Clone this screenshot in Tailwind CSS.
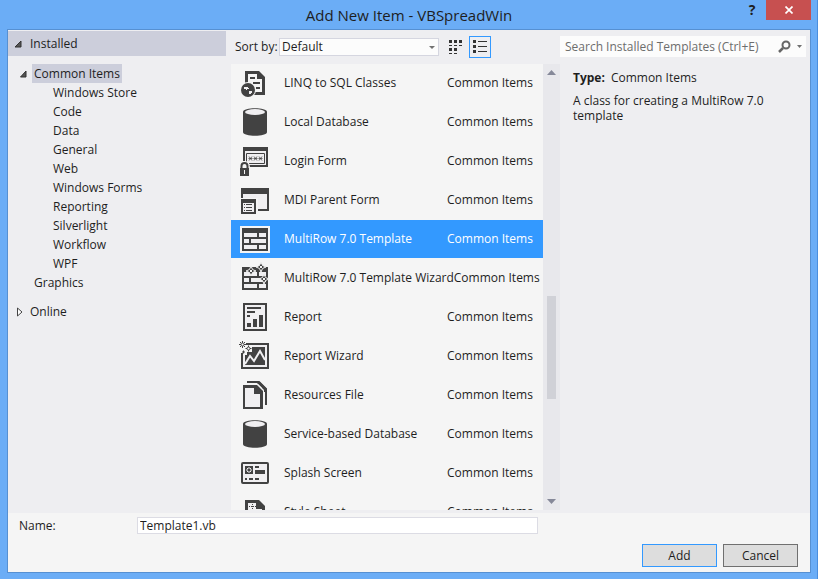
<!DOCTYPE html>
<html lang="en">
  <head>
    <meta charset="UTF-8" />
    <meta name="viewport" content="width=device-width, initial-scale=1.0" />
    <title>Add New Item - VBSpreadWin</title>
    <script src="https://cdn.jsdelivr.net/npm/@tailwindcss/browser@4"></script>
  </head>
  <body class="font-['Segoe_UI','Open_Sans',sans-serif] text-xs text-[#1e1e1e]">
    <!-- shared icons -->
    <svg class="hidden">
      <symbol id="database" viewBox="0 0 32 32">
        <path fill="#424242" d="M4 6c0-5 24-5 24 0v20c0 5-24 5-24 0z" />
        <ellipse cx="16" cy="6" rx="10" ry="3" fill="#f0eff1" />
      </symbol>
      <symbol id="bricks" viewBox="0 0 32 32">
        <path fill="#424242" d="M3 5h26v23H3z" />
        <path fill="#f0eff1" d="M5 10h13v4H5zM20 10h7v4h-7zM5 16h5v4H5zM12 16h15v4H12zM5 22h13v4H5zM20 22h7v4h-7z" />
      </symbol>
    </svg>

    <div class="flex flex-col h-screen bg-[#6badf6] border-r border-[#4a8ede] pl-[7px] pr-[6px] pb-[6px]">
      <header class="relative flex h-[29px] shrink-0 items-center justify-center">
        <h1 class="text-[15px] leading-5">Add New Item - VBSpreadWin</h1>
        <div class="absolute right-0 top-0 flex">
          <button class="w-7 h-5 text-sm leading-5 font-bold" aria-label="Help">?</button>
          <button class="flex w-[45px] h-5 items-center justify-center bg-[#c75050]" aria-label="Close">
            <svg width="8" height="8" viewBox="0 0 8 8" stroke="#fff" stroke-width="1.700"><path d="M0.500 0.500l7 7M7.500 0.500l-7 7" /></svg>
          </button>
        </div>
      </header>

      <div class="flex flex-col flex-1 min-h-0 border border-[#5690d2] bg-[#f5f5f5]">
        <main class="flex flex-1 min-h-0 bg-[#eeeef1]">
          <nav class="w-[218px] shrink-0 pt-px">
            <button class="flex w-full h-[25px] items-center gap-2 pl-1.5 bg-[#cccedb]">
              <svg width="8" height="8" viewBox="0 0 8 8"><path d="M7 1v6H1z" fill="#555" stroke="#333" /></svg>
              Installed
            </button>
            <div class="mt-2 flex h-[19px] items-center gap-1 pl-3">
              <svg width="8" height="8" viewBox="0 0 8 8"><path d="M6 1v6H0.500z" fill="#555" stroke="#333" /></svg>
              <button class="h-[19px] px-0.5 bg-[#cccedb]">Common Items</button>
            </div>
            <ul class="pl-[45px] leading-[19px]">
              <li><button>Windows Store</button></li>
              <li><button>Code</button></li>
              <li><button>Data</button></li>
              <li><button>General</button></li>
              <li><button>Web</button></li>
              <li><button>Windows Forms</button></li>
              <li><button>Reporting</button></li>
              <li><button>Silverlight</button></li>
              <li><button>Workflow</button></li>
              <li><button>WPF</button></li>
            </ul>
            <button class="block pl-[26px] leading-[19px]">Graphics</button>
            <button class="mt-[10px] flex h-[19px] items-center gap-[7px] pl-[9px]">
              <svg width="6" height="10" viewBox="0 0 6 10"><path d="M0.500 1v8L5 5z" fill="#fff" stroke="#444" /></svg>
              Online
            </button>
          </nav>

          <section class="flex flex-col flex-1 min-w-0 ml-[5px]">
            <div class="flex h-[34px] shrink-0 items-center pl-1">
              <label for="sort" class="w-11 whitespace-nowrap">Sort by:</label>
              <div class="relative flex items-center">
                <select id="sort" class="w-40 h-[18px] pl-0.5 leading-4 appearance-none bg-[#fcfcfc] border border-[#d5d6e0]">
                  <option>Default</option>
                </select>
                <svg class="absolute right-1 pointer-events-none" width="6" height="3" viewBox="0 0 6 3"><path d="M0 0h6L3 3z" fill="#717171" /></svg>
              </div>
              <button class="ml-1.5 mr-0.5 flex w-[22px] h-[22px] items-center justify-center" aria-label="Small icons">
                <svg width="14" height="14" viewBox="0 0 14 14" fill="#333">
                  <path d="M0 0h3v3H0zM5 0h3v3H5zM10 0h3v3h-3zM0 8h3v3H0zM5 8h3v3H5zM0 5h3v1H0zM5 5h3v1H5zM10 5h3v1h-3zM0 13h3v1H0zM5 13h3v1H5z" />
                </svg>
              </button>
              <button class="flex w-[22px] h-[22px] items-center justify-center border border-[#3399ff]" aria-label="List">
                <svg width="14" height="14" viewBox="0 0 14 14" fill="#333">
                  <path d="M0 0h3v3H0zM0 5h3v3H0zM0 10h3v3H0zM5 1h9v1H5zM5 6h9v1H5zM5 11h9v1H5z" />
                </svg>
              </button>
            </div>

            <div class="flex flex-1 min-h-0 mb-[3px]">
              <ul class="flex flex-col gap-px flex-1 min-w-0 overflow-hidden bg-[#f5f5f5]" role="listbox" aria-label="Templates">
                <li role="option" class="flex h-[38px] shrink-0 items-center pl-2">
                  <svg class="size-8 shrink-0 mr-[13px]" viewBox="0 0 32 32">
                    <path fill="#424242" d="M6 4h14l6 6v18H6z" />
                    <path fill="#f5f5f5" d="M9 7h9v5h5v13H9z" />
                    <path fill="#424242" d="M11 10h5v2h-5zM14 15h7v2h-7zM17 20h4v2h-4z" />
                    <circle cx="9" cy="23" r="8" fill="#f5f5f5" />
                    <circle cx="9" cy="23" r="7" fill="#424242" />
                    <path fill="#f0eff1" d="M5 20h4v1h1v3H8v-1H7v-1H5zM10 24h3v2h-1v1h-2z" />
                    <path fill="#424242" d="M8 22h2v2H8z" />
                  </svg>
                  <span class="flex-1 whitespace-nowrap">LINQ to SQL Classes</span>
                  <span class="w-24 whitespace-nowrap">Common Items</span>
                </li>
                <li role="option" class="flex h-[38px] shrink-0 items-center pl-2">
                  <svg class="size-8 shrink-0 mr-[13px]"><use href="#database" /></svg>
                  <span class="flex-1 whitespace-nowrap">Local Database</span>
                  <span class="w-24 whitespace-nowrap">Common Items</span>
                </li>
                <li role="option" class="flex h-[38px] shrink-0 items-center pl-2">
                  <svg class="size-8 shrink-0 mr-[13px]" viewBox="0 0 32 32">
                    <path fill="#424242" d="M4 2h25v20H4z" />
                    <path fill="#f0eff1" d="M6 6h21v14H6z" />
                    <path fill="none" stroke="#424242" d="M7.500 8.500h18v10h-18z" />
                    <path stroke="#424242" d="M10 11.500l3 4M13 11.500l-3 4M15 11.500l3 4M18 11.500l-3 4M20 11.500l3 4M23 11.500l-3 4M9.500 13.500h4M14.500 13.500h4M19.500 13.500h4" stroke-width=".8" />
                    <path fill="#f5f5f5" d="M0 22l1-4 3-2h3l3 2 1 4v10H0z" />
                    <path fill="none" stroke="#424242" stroke-width="2" d="M2.500 23v-2a3 3 0 0 1 6 0v2" />
                    <path fill="#424242" d="M1 23h9v8H1z" />
                    <path fill="#f5f5f5" d="M5 25h1v4H5z" />
                  </svg>
                  <span class="flex-1 whitespace-nowrap">Login Form</span>
                  <span class="w-24 whitespace-nowrap">Common Items</span>
                </li>
                <li role="option" class="flex h-[38px] shrink-0 items-center pl-2">
                  <svg class="size-8 shrink-0 mr-[13px]" viewBox="0 0 32 32">
                    <path fill="#424242" d="M2 4h28v23H2z" />
                    <path fill="#f0eff1" d="M4 10h24v15H4z" />
                    <path fill="#f5f5f5" d="M1 14h18v17H1z" />
                    <path fill="#424242" d="M2 15h15v15H2z" />
                    <path fill="#f0eff1" d="M4 19h11v9H4z" />
                    <path fill="#424242" d="M5 20h1v1H5zM7 20h6v1H7zM5 23h1v1H5zM7 23h6v1H7zM5 26h1v1H5zM7 26h6v1H7z" />
                  </svg>
                  <span class="flex-1 whitespace-nowrap">MDI Parent Form</span>
                  <span class="w-24 whitespace-nowrap">Common Items</span>
                </li>
                <li role="option" aria-selected="true" class="flex h-[38px] shrink-0 items-center pl-2 bg-[#3399ff] text-white">
                  <svg class="size-8 shrink-0 mr-[13px]" viewBox="0 0 32 32">
                    <path fill="#f5f5f5" d="M1 3h30v27H1z" />
                    <use href="#bricks" width="32" height="32" />
                  </svg>
                  <span class="flex-1 whitespace-nowrap">MultiRow 7.0 Template</span>
                  <span class="w-24 whitespace-nowrap">Common Items</span>
                </li>
                <li role="option" class="flex h-[38px] shrink-0 items-center pl-2">
                  <svg class="size-8 shrink-0 mr-[13px]" viewBox="0 0 32 32">
                    <use href="#bricks" width="32" height="32" />
                    <g fill="#424242" stroke="#f5f5f5">
                      <path d="M12 4l1.500 3.500L17 9l-3.500 1.500L12 14l-1.500-3.500L7 9l3.500-1.500z" />
                      <path d="M22 0l1.500 3.500L27 5l-3.500 1.500L22 10l-1.500-3.500L17 5l3.500-1.500z" />
                      <path d="M25 12l1.500 3.500L30 17l-3.500 1.500L25 22l-1.500-3.500L20 17l3.500-1.500z" />
                    </g>
                    <path fill="#f5f5f5" d="M11 8h2v2h-2zM21 4h2v2h-2zM24 16h2v2h-2z" />
                  </svg>
                  <span class="flex-1 whitespace-nowrap">MultiRow 7.0 Template Wizard</span>
                  <span class="w-24 whitespace-nowrap">Common Items</span>
                </li>
                <li role="option" class="flex h-[38px] shrink-0 items-center pl-2">
                  <svg class="size-8 shrink-0 mr-[13px]" viewBox="0 0 32 32">
                    <path fill="#f0eff1" stroke="#424242" stroke-width="2" d="M5 3h22v26H5z" />
                    <path fill="#424242" d="M8 6h14v2H8zM8 10h8v2H8zM8 14h3v2H8zM8 22h4v4H8zM14 18h4v8h-4zM20 14h4v12h-4z" />
                  </svg>
                  <span class="flex-1 whitespace-nowrap">Report</span>
                  <span class="w-24 whitespace-nowrap">Common Items</span>
                </li>
                <li role="option" class="flex h-[38px] shrink-0 items-center pl-2">
                  <svg class="size-8 shrink-0 mr-[13px]" viewBox="0 0 32 32">
                    <path fill="#f0eff1" stroke="#424242" stroke-width="2" d="M3 4h26v24H3z" />
                    <path fill="#424242" d="M6 7h20v18H6z" />
                    <path fill="none" stroke="#f0eff1" stroke-width="2" d="M6 24l5-8 4 5 6-10 5 9" />
                    <path fill="#f5f5f5" d="M0 1h7v4h6v7H8v3H4v-2H1z" />
                    <g fill="none" stroke="#424242">
                      <circle cx="3.500" cy="4.500" r="1.500" />
                      <path d="M3.500 1v2M3.500 6v2M0 4.500h2M5 4.500h2M1 2l1 1M5 6l1 1M6 2l-1 1M2 6l-1 1" />
                      <circle cx="9.500" cy="8.500" r="1.500" />
                      <path d="M9.500 5.500v1.500M9.500 10v1.500M6.500 8.500h1.500M11 8.500h1.500" />
                      <path d="M4.500 10.500v3M3 12h3" />
                    </g>
                  </svg>
                  <span class="flex-1 whitespace-nowrap">Report Wizard</span>
                  <span class="w-24 whitespace-nowrap">Common Items</span>
                </li>
                <li role="option" class="flex h-[38px] shrink-0 items-center pl-2">
                  <svg class="size-8 shrink-0 mr-[13px]" viewBox="0 0 32 32">
                    <path fill="none" stroke="#424242" stroke-width="2" d="M8 3h12l7 7v16" />
                    <path fill="#424242" d="M17 3h4l7 7v3h-5v-4z" />
                    <path fill="#f5f5f5" d="M4 5h15l6 6v19H4z" />
                    <path fill="#424242" d="M4 6h14l6 6v18H4z" />
                    <path fill="#f0eff1" d="M6 9h9v6h6v13H6z" />
                  </svg>
                  <span class="flex-1 whitespace-nowrap">Resources File</span>
                  <span class="w-24 whitespace-nowrap">Common Items</span>
                </li>
                <li role="option" class="flex h-[38px] shrink-0 items-center pl-2">
                  <svg class="size-8 shrink-0 mr-[13px]"><use href="#database" /></svg>
                  <span class="flex-1 whitespace-nowrap">Service-based Database</span>
                  <span class="w-24 whitespace-nowrap">Common Items</span>
                </li>
                <li role="option" class="flex h-[38px] shrink-0 items-center pl-2">
                  <svg class="size-8 shrink-0 mr-[13px]" viewBox="0 0 32 32">
                    <rect x="3" y="6" width="26" height="20" rx="1" fill="#f0eff1" stroke="#424242" stroke-width="2" />
                    <path fill="#424242" d="M6 9h8v8H6zM16 9h4v2h-4zM16 13h10v4H16zM6 21h2v2H6zM10 21h4v2h-4zM16 21h4v2h-4z" />
                    <path stroke="#f0eff1" d="M10 10v2M10 14v2M7 13h2M11 13h2M8 11l1 1M11 14l1 1M12 11l-1 1M9 14l-1 1" />
                  </svg>
                  <span class="flex-1 whitespace-nowrap">Splash Screen</span>
                  <span class="w-24 whitespace-nowrap">Common Items</span>
                </li>
                <li role="option" class="flex h-[38px] shrink-0 items-center pl-2">
                  <svg class="size-8 shrink-0 mr-[13px]" viewBox="0 0 32 32">
                    <path fill="#424242" d="M6 4h14l6 6v18H6z" />
                    <path fill="#f0eff1" d="M9 7h8v6h6v12H9z" />
                    <path stroke="#424242" stroke-dasharray="1 1" d="M10 10.500h7M13.500 8v5" />
                  </svg>
                  <span class="flex-1 whitespace-nowrap">Style Sheet</span>
                  <span class="w-24 whitespace-nowrap">Common Items</span>
                </li>
              </ul>
              <!-- scrollbar -->
              <div class="flex flex-col w-[17px] shrink-0 items-center bg-[#e8e8ec] py-1.5">
                <svg width="9" height="5" viewBox="0 0 9 5"><path d="M0 5h9L4.500 0z" fill="#868999" /></svg>
                <div class="flex flex-col flex-1 w-[9px]">
                  <div class="grow-[221]"></div>
                  <div class="grow-[103] bg-[#d0d1d7]"></div>
                  <div class="grow-[100]"></div>
                </div>
                <svg width="9" height="5" viewBox="0 0 9 5"><path d="M0 0h9L4.500 5z" fill="#868999" /></svg>
              </div>
            </div>
          </section>

          <aside class="w-[250px] shrink-0 pt-1.5">
            <div class="flex h-[21px] mr-1 items-center bg-[#fcfcfc] pr-1">
              <input type="search" aria-label="Search Installed Templates" placeholder="Search Installed Templates (Ctrl+E)" class="flex-1 min-w-0 pl-[5px] outline-none placeholder:text-[#6d6d6d]" />
              <button aria-label="Search">
                <svg width="13" height="13" viewBox="0 0 13 13" fill="none" stroke="#666"><circle cx="8" cy="5" r="3.500" stroke-width="2" /><path d="M5 8l-4 4" stroke-width="2.500" /></svg>
              </button>
              <button class="ml-1.5" aria-label="Search options">
                <svg width="5" height="3" viewBox="0 0 5 3"><path d="M0 0h5L2.500 3z" fill="#717171" /></svg>
              </button>
            </div>
            <div class="pl-[13px] pr-4 pt-[13px]">
              <p class="leading-4"><b class="mr-1.5">Type:</b>Common Items</p>
              <p class="mt-[7px] leading-[15px]">A class for creating a MultiRow 7.0 template</p>
            </div>
          </aside>
        </main>

        <footer class="pt-1 pb-[5px]">
          <div class="flex items-center">
            <label for="name" class="w-[129px] pl-[11px]">Name:</label>
            <input id="name" type="text" value="Template1.vb" class="w-1/2 h-[17px] pl-0.5 leading-4 bg-white border border-[#dcdce4]" />
          </div>
          <div class="mt-[10px] pr-3 flex justify-end gap-1.5">
            <button class="w-[75px] h-[23px] bg-[#dddddd] border border-[#3399ff]">Add</button>
            <button class="w-[75px] h-[23px] bg-[#dddddd] border border-[#707070]">Cancel</button>
          </div>
        </footer>
      </div>
    </div>
  </body>
</html>
